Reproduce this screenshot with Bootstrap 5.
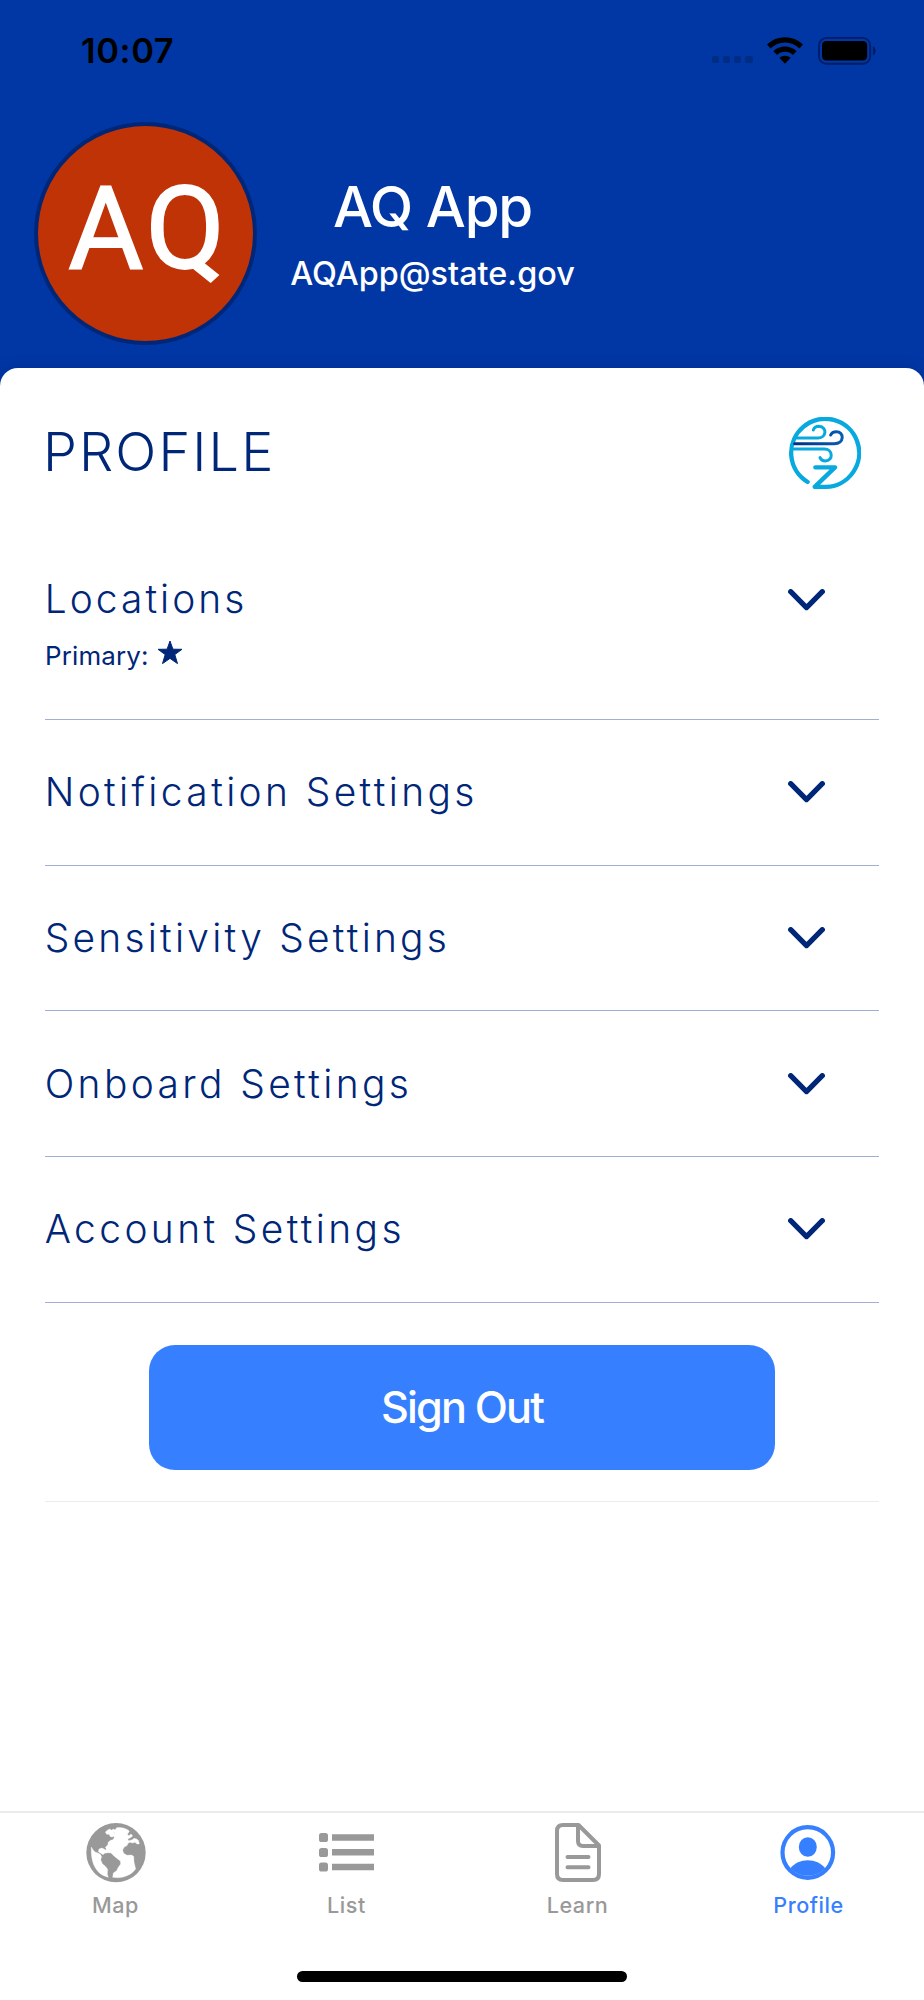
<!DOCTYPE html>
<html lang="en">
<head>
<meta charset="utf-8">
<meta name="viewport" content="width=device-width, initial-scale=1">
<title>Profile</title>
<link rel="stylesheet" href="https://cdn.jsdelivr.net/npm/bootstrap@5.3.0/dist/css/bootstrap.min.css">
<style>
  :root { --navy: #002677; --royal: #0037a5; --action: #3680ff; --muted: #999; }
  body { font-family: Inter, "Liberation Sans", sans-serif; background: var(--royal); color: var(--navy); }
  svg { display: block; flex: none; }
  .screen { width: 924px; height: 2000px; overflow: hidden; }
  .status-bar { height: 101px; padding: 0 46px 0 81px; color: #000; }
  .clock { font-size: 34.5px; font-weight: 600; letter-spacing: .6px; line-height: 42px; }
  .dots { gap: 3.8px; margin: 18px 14.5px 0 0; }
  .dots i { width: 7.3px; height: 7.3px; border-radius: 2px; background: #002c84; }
  .account { height: 267px; padding: 21px 0 0 34px; }
  .avatar { width: 223px; height: 223px; border: 4px solid var(--navy); background: #bf3306; font: 400 115px/1 Roboto, sans-serif; -webkit-text-stroke: 1.8px #fff; letter-spacing: 3px; padding: 0 0 10px 5px; }
  .who { width: 351px; padding-top: 51px; }
  .who-name { font-size: 56.5px; font-weight: 500; letter-spacing: -1.2px; line-height: 68px; }
  .who-mail { font-size: 32.4px; font-weight: 500; line-height: 40px; margin-top: 13px; letter-spacing: 0; }
  .sheet { background: #fff; border-radius: 18px 18px 0 0; box-shadow: 0 0 14px rgba(0, 20, 90, .25); padding: 0 45px; }
  .sheet-head { height: 168px; padding-right: 18px; }
  .sheet-head h1 { font-size: 54px; font-weight: 300; letter-spacing: 2.1px; line-height: 66px; margin: 0 0 0 -2px; }
  .sheet-head svg { margin-top: 2px; }
  .settings .list-group-item { height: 145.7px; padding: 0 54px 0 0; color: var(--navy); background: none; border-color: #9fb0d4; border-width: 0 0 1.4px; border-radius: 0; }
  .settings .list-group-item:last-child { border-bottom-width: 1.4px; }
  .settings .list-group-item.locations { height: 184px; padding-top: 35px; align-items: flex-start !important; }
  .locations > svg { margin-top: 17.5px; }
  .row-title { font-size: 38.9px; font-weight: 300; letter-spacing: 3.4px; line-height: 56px; margin-left: -.3px; }
  .locations .row-title { letter-spacing: 3.05px; }
  .sensitivity .row-title { letter-spacing: 3.25px; }
  .primary-line { font-size: 25.9px; line-height: 34px; letter-spacing: .15px; margin-top: 12px; gap: 8.3px; }
  .primary-line svg { margin-top: -8px; }
  .sign-out { width: 626px; height: 125px; margin: 42px auto 0; border: 0; border-radius: 26px; background: var(--action); color: #fff; font-size: 43.2px; font-weight: 500; letter-spacing: -1.85px; }
  .end-line { height: 1px; background: #ececec; margin-top: 31px; }
  .tabs { height: 189px; border-top: 2px solid #ebebeb; background: #fff; }
  .tabs .nav-link { width: 231px; padding: 7px 0 0; color: var(--muted); font-size: 21.6px; font-weight: 500; letter-spacing: .55px; line-height: 26px; }
  .tabs .nav-link.active { color: var(--action); }
  .tabs .glyph { height: 65px; margin-bottom: 7px; }
  .home-bar { width: 330px; height: 11px; border-radius: 6px; background: #000; margin-bottom: 18px; }
</style>
</head>
<body>
<div class="screen d-flex flex-column">
  <div class="status-bar d-flex align-items-center justify-content-between">
    <div class="clock">10:07</div>
    <div class="d-flex align-items-center">
      <div class="dots d-flex"><i></i><i></i><i></i><i></i></div>
      <svg width="36" height="27" viewBox="0 0 36 27">
        <path d="M0 7.6A25.5 25.5 0 0 1 36 7.6L32.4 11.4A20.3 20.3 0 0 0 3.6 11.4ZM6.4 14.2A16.8 16.8 0 0 1 29.6 14.2L25.9 17.9A11.5 11.5 0 0 0 10.1 17.9ZM12.3 20.8A8.7 8.7 0 0 1 23.7 20.8L18 26.7Z"/>
      </svg>
      <svg width="59" height="28" viewBox="1 0 59 28" class="ms-3 overflow-visible">
        <rect x="1" y=".9" width="51.2" height="25.9" rx="7.6" fill="none" stroke="#001d66" stroke-width="1.9"/>
        <rect x="4" y="4.1" width="45.2" height="19.4" rx="4.2"/>
        <path d="M54.9 9.2Q57.7 10.6 57.7 13.8T54.9 18.4Z" fill="#001d66"/>
      </svg>
    </div>
  </div>

  <header class="account d-flex text-white">
    <div class="avatar rounded-circle d-flex align-items-center justify-content-center">AQ</div>
    <div class="who text-center">
      <div class="who-name">AQ App</div>
      <div class="who-mail">AQApp@state.gov</div>
    </div>
  </header>

  <main class="sheet flex-grow-1">
    <div class="sheet-head d-flex align-items-center justify-content-between">
      <h1>PROFILE</h1>
      <svg width="72" height="72" viewBox="0 0 216 216" fill="none" stroke="#08a9de" stroke-width="9" stroke-linecap="round" stroke-linejoin="round">
        <defs><linearGradient id="gust" gradientUnits="userSpaceOnUse" x1="18" y1="0" x2="160" y2="0"><stop offset="0" stop-color="#00307f"/><stop offset="1" stop-color="#0a5cb4"/></linearGradient></defs>
        <path d="M56 195A102 102 0 1 1 112 209.5H77L138 151H79" stroke-width="13"/>
        <path d="M20 63H88C112 63 116 30 90 28Q76 28 73 39"/>
        <path d="M17 80H136C167 80 166 44 142 44Q129 44 125 54" stroke="url(#gust)"/>
        <path d="M16 96H106C132 96 134 131 109 132Q97 132 93 122"/>
      </svg>
    </div>

    <div class="settings list-group list-group-flush">
      <div class="list-group-item locations d-flex justify-content-between">
        <div>
          <div class="row-title">Locations</div>
          <div class="primary-line d-flex align-items-center">Primary:
            <svg width="26" height="25" viewBox="0 0 26 25"><path fill="#002677" stroke="#002677" stroke-linejoin="round" d="M13 1 15.9 9.2 25 9.3 17.8 14.6 20.5 23.6 13 18.4 5.5 23.6 8.2 14.6 1 9.3 10.1 9.2Z"/></svg>
          </div>
        </div>
        <svg width="37" height="22" viewBox="0 0 37 22"><path d="M2.7 2.7 18.5 18.6 34.3 2.7" fill="none" stroke="#002677" stroke-width="5.2" stroke-linecap="round" stroke-linejoin="round"/></svg>
      </div>
      <div class="list-group-item d-flex align-items-center justify-content-between">
        <div class="row-title">Notification Settings</div>
        <svg width="37" height="22" viewBox="0 0 37 22"><path d="M2.7 2.7 18.5 18.6 34.3 2.7" fill="none" stroke="#002677" stroke-width="5.2" stroke-linecap="round" stroke-linejoin="round"/></svg>
      </div>
      <div class="list-group-item sensitivity d-flex align-items-center justify-content-between">
        <div class="row-title">Sensitivity Settings</div>
        <svg width="37" height="22" viewBox="0 0 37 22"><path d="M2.7 2.7 18.5 18.6 34.3 2.7" fill="none" stroke="#002677" stroke-width="5.2" stroke-linecap="round" stroke-linejoin="round"/></svg>
      </div>
      <div class="list-group-item d-flex align-items-center justify-content-between">
        <div class="row-title">Onboard Settings</div>
        <svg width="37" height="22" viewBox="0 0 37 22"><path d="M2.7 2.7 18.5 18.6 34.3 2.7" fill="none" stroke="#002677" stroke-width="5.2" stroke-linecap="round" stroke-linejoin="round"/></svg>
      </div>
      <div class="list-group-item d-flex align-items-center justify-content-between">
        <div class="row-title">Account Settings</div>
        <svg width="37" height="22" viewBox="0 0 37 22"><path d="M2.7 2.7 18.5 18.6 34.3 2.7" fill="none" stroke="#002677" stroke-width="5.2" stroke-linecap="round" stroke-linejoin="round"/></svg>
      </div>
    </div>

    <button class="sign-out btn d-flex align-items-center justify-content-center" type="button">Sign Out</button>
    <div class="end-line"></div>
  </main>

  <nav class="tabs d-flex flex-column align-items-center">
    <div class="nav flex-nowrap">
      <a class="nav-link text-center" href="#">
        <div class="glyph d-flex align-items-center justify-content-center">
          <svg width="60" height="60" viewBox="78 68 180 180">
            <circle cx="168" cy="157" r="89" fill="#999"/>
            <g fill="#fff" stroke="#fff" stroke-width="1" stroke-linejoin="round">
              <path d="M170 82C186 80 198 84 208 92L205 98 202 102 207 106 213 101 218 107 211 112 203 116 206 121 217 118 222 114 230 116 236 121 238 131 231 131 225 126 218 128 209 126 203 130 202 135 192 141 188 150 191 159 201 165 214 164 221 168 222 185 227 206C214 224 192 232 173 232L158 231 160 218 170 211 174 202 182 191 181 182 172 175 162 167 153 158 144 157 134 159 129 163 121 158 115 154 117 146 125 143 133 146 136 150 139 146 136 141 143 134 145 125 152 120 159 118 163 111 159 105 165 99 162 94 157 96 154 90 160 86 165 89Z"/>
              <path d="M136 95 143 89 149 86 155 90 160 95 165 97 163 106 157 110 151 109 147 102 140 102Z"/>
              <path d="M94 140 99 148 105 155 114 158 121 162 125 169 122 178 127 190 136 198 143 207 142 222 145 231C113 224 91 194 94 140Z"/>
            </g>
          </svg>
        </div>
        Map
      </a>
      <a class="nav-link text-center" href="#">
        <div class="glyph d-flex align-items-center justify-content-center">
          <svg width="55" height="39" viewBox="0 0 55 39" fill="#999">
            <rect x="0" y="0" width="9" height="9" rx="2.6"/><rect x="0" y="15" width="9" height="9" rx="2.6"/><rect x="0" y="29.5" width="9" height="9" rx="2.6"/>
            <path d="M13 1.3h42v6.4H13zM13 16h42v6.4H13zM13 30.8h42v6.4H13z"/>
          </svg>
        </div>
        List
      </a>
      <a class="nav-link text-center" href="#">
        <div class="glyph d-flex align-items-center justify-content-center">
          <svg width="46" height="59" viewBox="0 0 46 59" fill="none" stroke="#999" stroke-width="4" stroke-linecap="round" stroke-linejoin="round">
            <path d="M8 2H23.5L44 22.5V51Q44 57 38 57H8Q2 57 2 51V8Q2 2 8 2ZM23 3V18Q23 23 28 23H43M12.5 34H33.5M12.5 44.2H33.5"/>
          </svg>
        </div>
        Learn
      </a>
      <a class="nav-link active text-center" href="#">
        <div class="glyph d-flex align-items-center justify-content-center">
          <svg width="55" height="55" viewBox=".7 0 55 55" class="overflow-visible">
            <circle cx="27.5" cy="27.5" r="25.3" fill="none" stroke="#3680ff" stroke-width="4.2"/>
            <ellipse cx="27.5" cy="22" rx="9" ry="9.8" fill="#3680ff"/>
            <path d="M10 43.6C18 32.6 37 32.6 45 43.6A25 25 0 0 1 10 43.6Z" fill="#3680ff"/>
          </svg>
        </div>
        Profile
      </a>
    </div>
    <div class="home-bar mt-auto"></div>
  </nav>
</div>
<script src="https://cdn.jsdelivr.net/npm/bootstrap@5.3.0/dist/js/bootstrap.bundle.min.js"></script>
</body>
</html>
